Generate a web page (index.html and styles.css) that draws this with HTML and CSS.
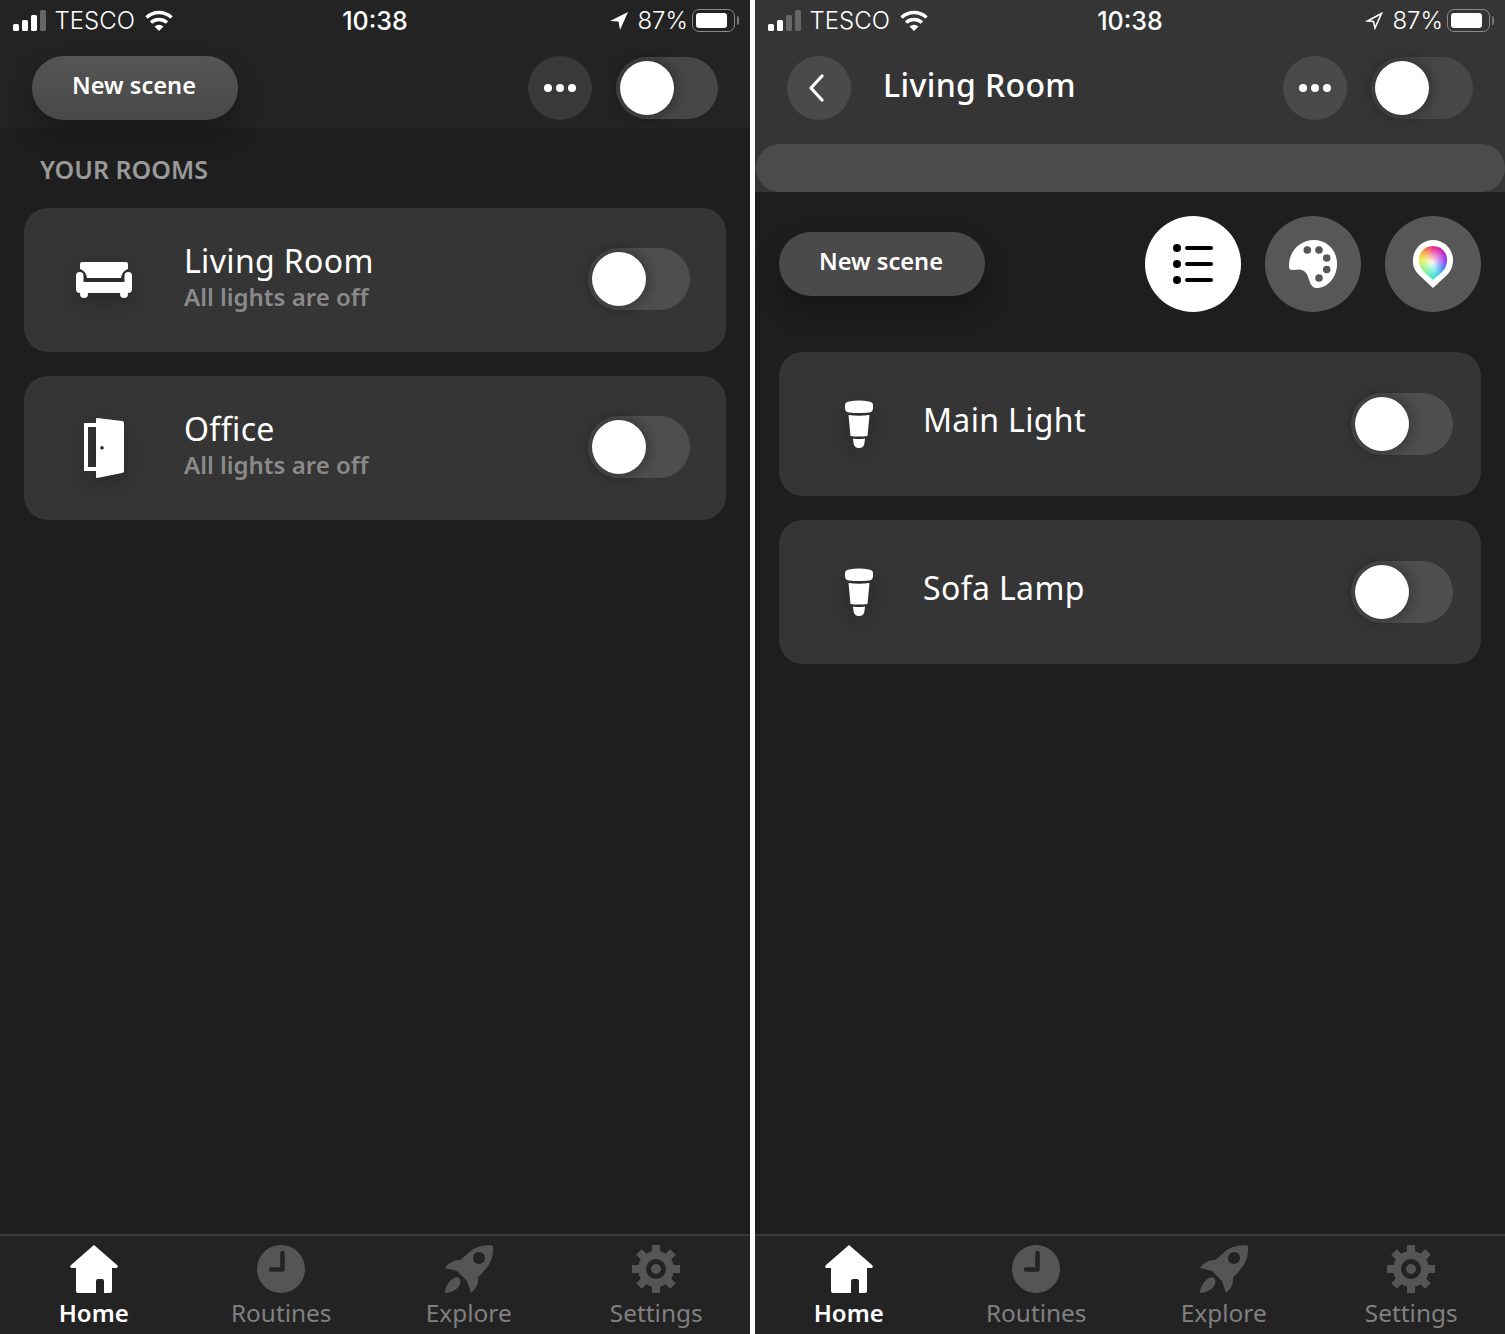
FILE: index.html
```html
<!DOCTYPE html>
<html>
<head>
  <title>Hue</title>
  <link rel="stylesheet" href="styles.css">
</head>
<body>
  <svg class="defs">
    <symbol id="wifi" viewBox="0 0 28 21">
      <path d="M1.5 7.5A18 18 0 0 1 26.5 7.5M6 12.5A12 12 0 0 1 22 12.5" fill="none" stroke="#fff" stroke-width="3.4"/>
      <path d="M9.5 16.5Q14 13 18.5 16.5L14 21Z" fill="#fff"/>
    </symbol>
    <symbol id="dots" viewBox="0 0 32 8"><circle cx="4" cy="4" r="4" fill="#fff"/><circle cx="16" cy="4" r="4" fill="#fff"/><circle cx="28" cy="4" r="4" fill="#fff"/></symbol>
    <symbol id="bulb" viewBox="0 0 28 48">
      <path fill="#fff" d="M0 5Q0 2 4 1.5Q14-.5 24 1.5Q28 2 28 5V8Q28 12 24 12.5Q14 13.5 4 12.5Q0 12 0 8Z"/>
      <path fill="#fff" d="M3.5 15Q14 16.5 24.5 15L22.5 36Q14 37 5.5 36Z"/>
      <path fill="#fff" d="M8 38.5Q14 39.5 20 38.5L19.5 43Q19 48 14 48Q9 48 8.5 43Z"/>
    </symbol>
    <symbol id="tab-home" viewBox="0 0 48 48">
      <path fill="currentColor" d="M24 0L47 20Q49 23 46 23H42V46Q42 48 40 48H34V36Q34 34 32 34H28Q26 34 26 36V48H8Q6 48 6 46V23H2Q-1 23 1 20Z"/>
    </symbol>
    <symbol id="tab-routines" viewBox="0 0 48 48">
      <circle cx="24" cy="24" r="24" fill="currentColor"/>
      <path d="M25.5 8V24.5H14" fill="none" stroke="#232323" stroke-width="4.5" stroke-linecap="round" stroke-linejoin="round"/>
    </symbol>
    <symbol id="tab-explore" viewBox="0 0 48 48">
      <path fill="currentColor" fill-rule="evenodd" d="M48 1C47 0 36-1 27 5C22 9 18 13 15 15C9 15 3 18 0 23L12 26L22 36L26 48C31 44 34 38 33 32C37 29 40 25 43 21C49 13 48 3 48 1ZM34 7a6 6 0 1 0 .01 0Z"/>
      <path fill="currentColor" d="M9 33C13 31 17 34 15 39C13 45 5 48 0 48C0 43 3 36 9 33Z"/>
    </symbol>
    <symbol id="tab-settings" viewBox="0 0 48 48">
      <g stroke="currentColor" stroke-width="8">
        <path d="M24 0V48M0 24H48M7 7L41 41M41 7L7 41"/>
      </g>
      <circle cx="24" cy="24" r="18" fill="currentColor"/>
      <circle cx="24" cy="24" r="7.5" fill="none" stroke="#232323" stroke-width="5"/>
    </symbol>
  </svg>

  <div class="screens">
    <!-- rooms -->
    <section class="phone">
      <header class="top">
        <div class="status">
          <div class="status-side">
            <div class="signal">
              <span class="bar bar-1"></span><span class="bar bar-2"></span><span class="bar bar-3"></span><span class="bar bar-4 bar-off"></span>
            </div>
            <span class="carrier">TESCO</span>
            <svg class="wifi"><use href="#wifi"/></svg>
          </div>
          <div class="time">10:38</div>
          <div class="status-side status-right">
            <svg class="arrow" viewBox="0 0 18 18"><path fill="#fff" d="M0 9L18 0L10 18L8.5 9.5Z"/></svg>
            <span class="percent">87%</span>
            <div class="battery"><div class="battery-body"><div class="battery-fill"></div></div><div class="battery-nub"></div></div>
          </div>
        </div>
        <div class="toolbar">
          <button class="pill pill-top">New scene</button>
          <div class="toolbar-end">
            <div class="round"><svg class="dots"><use href="#dots"/></svg></div>
            <div class="toggle toggle-top"><span class="knob"></span></div>
          </div>
        </div>
      </header>
      <main class="content">
        <h2 class="rooms-label">YOUR ROOMS</h2>
        <div class="cards">
          <div class="card">
            <div class="card-icon">
              <svg class="icon-sofa" viewBox="0 0 56 36">
                <path fill="#fff" d="M4 2Q4 0 6 0H50Q52 0 52 2V7Q46 9 45 16H11Q10 9 4 7Z"/>
                <rect x="0" y="10" width="7.5" height="21" rx="3.7" fill="#fff"/>
                <rect x="48.5" y="10" width="7.5" height="21" rx="3.7" fill="#fff"/>
                <rect x="7" y="20" width="42" height="11" fill="#fff"/>
                <rect x="4" y="28" width="8" height="8" rx="4" fill="#fff"/>
                <rect x="44" y="28" width="8" height="8" rx="4" fill="#fff"/>
              </svg>
            </div>
            <div class="card-text">
              <div class="card-title">Living Room</div>
              <div class="card-sub">All lights are off</div>
            </div>
            <div class="toggle toggle-room"><span class="knob"></span></div>
          </div>
          <div class="card">
            <div class="card-icon">
              <svg class="icon-door" viewBox="0 0 40 60">
                <path fill="#fff" d="M12 5H0V53H12V49H4V9H12Z"/>
                <path fill="#fff" fill-rule="evenodd" d="M12 1Q12 0 13 0L38 3Q40 3 40 5V53Q40 55 38 55L13 60Q12 60 12 59ZM18 28a1.8 1.8 0 1 0 .01 0Z"/>
              </svg>
            </div>
            <div class="card-text">
              <div class="card-title">Office</div>
              <div class="card-sub">All lights are off</div>
            </div>
            <div class="toggle toggle-room"><span class="knob"></span></div>
          </div>
        </div>
      </main>
      <nav class="tabs">
        <div class="tab tab-active"><svg class="tab-icon"><use href="#tab-home"/></svg><span>Home</span></div>
        <div class="tab"><svg class="tab-icon"><use href="#tab-routines"/></svg><span>Routines</span></div>
        <div class="tab"><svg class="tab-icon"><use href="#tab-explore"/></svg><span>Explore</span></div>
        <div class="tab"><svg class="tab-icon"><use href="#tab-settings"/></svg><span>Settings</span></div>
      </nav>
    </section>

    <!-- living room -->
    <section class="phone">
      <header class="top top-room">
        <div class="status">
          <div class="status-side">
            <div class="signal">
              <span class="bar bar-1"></span><span class="bar bar-2"></span><span class="bar bar-3 bar-off"></span><span class="bar bar-4 bar-off"></span>
            </div>
            <span class="carrier">TESCO</span>
            <svg class="wifi"><use href="#wifi"/></svg>
          </div>
          <div class="time">10:38</div>
          <div class="status-side status-right">
            <svg class="arrow" viewBox="0 0 18 18"><path fill="none" stroke="#fff" stroke-width="1.6" d="M2.5 9L16.5 1.5L10 16L8.5 9.5Z"/></svg>
            <span class="percent">87%</span>
            <div class="battery"><div class="battery-body"><div class="battery-fill"></div></div><div class="battery-nub"></div></div>
          </div>
        </div>
        <div class="toolbar">
          <div class="toolbar-start">
            <div class="round round-light">
              <svg class="back" viewBox="0 0 16 28"><path d="M14 2L3 14L14 26" fill="none" stroke="#fff" stroke-width="3.2" stroke-linecap="round" stroke-linejoin="round"/></svg>
            </div>
            <h1 class="room-title">Living Room</h1>
          </div>
          <div class="toolbar-end">
            <div class="round round-light"><svg class="dots"><use href="#dots"/></svg></div>
            <div class="toggle toggle-top"><span class="knob"></span></div>
          </div>
        </div>
        <div class="brightness"></div>
      </header>
      <main class="content">
        <div class="scene-row">
          <button class="pill">New scene</button>
          <div class="views">
            <div class="view view-on">
              <svg class="icon-list" viewBox="0 0 40 40">
                <circle cx="4" cy="4" r="4"/><circle cx="4" cy="20" r="4"/><circle cx="4" cy="36" r="4"/>
                <path d="M14 4H38M14 20H38M14 36H38" stroke="#000" stroke-width="4" stroke-linecap="round"/>
              </svg>
            </div>
            <div class="view">
              <svg class="icon-palette" viewBox="0 0 48 48">
                <path fill="#fff" d="M0 26C0 10 12 0 25 0C38 0 48 10 48 24C48 38 38 48 28 48C20 48 21 38 17 33C13 28 8 30 4 30C1 30 0 29 0 26Z"/>
                <circle cx="18.3" cy="10" r="3.8" fill="#575757"/>
                <circle cx="30" cy="10" r="3.8" fill="#575757"/>
                <circle cx="37.7" cy="18" r="3.8" fill="#575757"/>
                <circle cx="37.7" cy="29.5" r="3.8" fill="#575757"/>
                <circle cx="30" cy="38" r="3.8" fill="#575757"/>
              </svg>
            </div>
            <div class="view">
              <div class="pin"><div class="pin-colors"></div></div>
            </div>
          </div>
        </div>
        <div class="cards cards-lights">
          <div class="card card-light">
            <div class="card-icon card-icon-light"><svg class="icon-bulb"><use href="#bulb"/></svg></div>
            <div class="card-text"><div class="card-title">Main Light</div></div>
            <div class="toggle"><span class="knob"></span></div>
          </div>
          <div class="card card-light">
            <div class="card-icon card-icon-light"><svg class="icon-bulb"><use href="#bulb"/></svg></div>
            <div class="card-text"><div class="card-title">Sofa Lamp</div></div>
            <div class="toggle"><span class="knob"></span></div>
          </div>
        </div>
      </main>
      <nav class="tabs">
        <div class="tab tab-active"><svg class="tab-icon"><use href="#tab-home"/></svg><span>Home</span></div>
        <div class="tab"><svg class="tab-icon"><use href="#tab-routines"/></svg><span>Routines</span></div>
        <div class="tab"><svg class="tab-icon"><use href="#tab-explore"/></svg><span>Explore</span></div>
        <div class="tab"><svg class="tab-icon"><use href="#tab-settings"/></svg><span>Settings</span></div>
      </nav>
    </section>
  </div>
</body>
</html>
```
FILE: styles.css
```css
body {
  margin: 0;
  padding: 0;
  background: #fff;
  font-family: "Noto Sans", "Open Sans", sans-serif;
  color: #fff;
}

.defs {
  display: none;
}

.screens {
  display: flex;
  gap: 5px;
  width: 1505px;
  height: 1334px;
  overflow: hidden;
}

.phone {
  display: flex;
  flex-direction: column;
  width: 750px;
  height: 1334px;
  background: #1e1e1e;
}

/* header */
.top {
  height: 128px;
  background: #232323;
}

.top-room {
  height: 192px;
  background: #353535;
}

.status {
  display: grid;
  grid-template-columns: 1fr auto 1fr;
  align-items: center;
  height: 40px;
  padding: 1px 11px 0 13px;
  box-sizing: border-box;
  font-family: Inter, "Liberation Sans", sans-serif;
  font-size: 25px;
}

.status-side {
  display: flex;
  align-items: center;
}

.status-right {
  justify-content: flex-end;
}

.signal {
  display: flex;
  align-items: flex-end;
  gap: 3.5px;
  height: 21px;
}

.bar {
  width: 5.5px;
  background: #fff;
  border-radius: 1.5px;
}

.bar-1 { height: 7px; }
.bar-2 { height: 11px; }
.bar-3 { height: 16px; }
.bar-4 { height: 21px; }

.bar-off {
  background: #666;
}

.carrier {
  margin-left: 9px;
  font-size: 24px;
  font-weight: 300;
}

.wifi {
  width: 28px;
  height: 21px;
  margin-left: 10px;
}

.time {
  font-weight: 500;
  margin-left: -2px;
}

.arrow {
  width: 18px;
  height: 18px;
  margin-right: 9px;
}

.percent {
  margin-right: 4px;
  font-size: 24px;
  font-weight: 300;
}

.battery {
  display: flex;
  align-items: center;
  gap: 2px;
}

.battery-body {
  width: 43px;
  height: 23px;
  padding: 3px;
  box-sizing: border-box;
  border: 1px solid #8a8a8a;
  border-radius: 7px;
}

.battery-fill {
  width: 31px;
  height: 100%;
  background: #fff;
  border-radius: 3px;
}

.battery-nub {
  width: 2px;
  height: 9px;
  background: #777;
  border-radius: 0 2px 2px 0;
}

.toolbar {
  display: flex;
  justify-content: space-between;
  align-items: center;
  height: 64px;
  margin-top: 16px;
  padding: 0 32px;
}

.toolbar-start,
.toolbar-end {
  display: flex;
  align-items: center;
}

.toolbar-end {
  gap: 24px;
}

.room-title {
  margin: -8px 0 0 32px;
  font-size: 32px;
  font-weight: 500;
  letter-spacing: 0.35px;
}

.round {
  display: flex;
  justify-content: center;
  align-items: center;
  width: 64px;
  height: 64px;
  background: #393939;
  border-radius: 50%;
}

.round-light {
  background: #4a4a4a;
}

.dots {
  width: 32px;
  height: 8px;
}

.back {
  width: 16px;
  height: 28px;
  margin-right: 6px;
}

.brightness {
  height: 48px;
  margin: 24px 0 0 1px;
  background: #4b4b4b;
  border-radius: 24px;
}

/* buttons and toggles */
.pill {
  width: 206px;
  height: 64px;
  padding: 0 2px 6px 0;
  border: none;
  border-radius: 32px;
  background: #4a4a4a;
  color: #fff;
  font-family: inherit;
  font-size: 23.6px;
  font-weight: 600;
  box-shadow: 0 14px 28px rgba(0, 0, 0, 0.3);
}

.pill-top {
  background: linear-gradient(#555, #484848);
}

.toggle {
  display: flex;
  align-items: center;
  width: 102px;
  height: 62px;
  padding: 4px;
  box-sizing: border-box;
  background: #4e4e4e;
  border-radius: 31px;
}

.toggle-top {
  background: #474747;
}

.toggle-room {
  margin-top: -2px;
}

.knob {
  width: 54px;
  height: 54px;
  background: #fff;
  border-radius: 50%;
  box-shadow: 0 0 14px 2px rgba(0, 0, 0, 0.35);
}

/* content */
.content {
  flex: 1;
  padding: 0 24px;
}

.rooms-label {
  margin: 0;
  padding: 23px 16px 0;
  height: 57px;
  font-size: 25px;
  line-height: 36px;
  font-weight: 600;
  color: #999;
}

.cards {
  display: flex;
  flex-direction: column;
  gap: 24px;
}

.cards-lights {
  margin-top: 40px;
}

.card {
  display: flex;
  align-items: center;
  height: 144px;
  padding-right: 36px;
  background: #353535;
  border-radius: 24px;
}

.card-light {
  padding-right: 28px;
}

.card-icon {
  display: flex;
  justify-content: center;
  align-items: center;
  flex: none;
  width: 160px;
  height: 100%;
  filter: drop-shadow(0 8px 10px rgba(0, 0, 0, 0.25));
}

.card-icon-light {
  width: 144px;
  justify-content: flex-start;
  padding-left: 66px;
  box-sizing: border-box;
}

.card-text {
  flex: 1;
  padding-bottom: 3px;
}

.card-title {
  font-size: 32px;
  line-height: 37px;
  letter-spacing: 0.35px;
}

.card-light .card-title {
  margin-bottom: 7px;
}

.card-sub {
  margin-top: -1px;
  font-size: 24px;
  line-height: 37px;
  font-weight: 600;
  color: #8a8a8a;
}

.icon-sofa {
  width: 56px;
  height: 36px;
}

.icon-door {
  width: 40px;
  height: 60px;
}

.icon-bulb {
  width: 28px;
  height: 48px;
}

.scene-row {
  display: flex;
  justify-content: space-between;
  align-items: center;
  padding-top: 24px;
}

.views {
  display: flex;
  gap: 24px;
}

.view {
  display: flex;
  justify-content: center;
  align-items: center;
  width: 96px;
  height: 96px;
  background: #575757;
  border-radius: 50%;
}

.view-on {
  background: #fff;
}

.icon-list {
  width: 40px;
  height: 40px;
}

.icon-palette {
  width: 48px;
  height: 48px;
}

.pin {
  width: 40px;
  height: 48px;
  padding: 6px;
  box-sizing: border-box;
  background: #fff;
  clip-path: path("M20 48L6 35C0 29 0 24 0 20C0 9 9 0 20 0C31 0 40 9 40 20C40 24 39 30 34 35Z");
}

.pin-colors {
  width: 28px;
  height: 36px;
  background: radial-gradient(circle at 50% 45%, rgba(255, 255, 255, 0.9), rgba(255, 255, 255, 0) 60%),
    conic-gradient(from 0deg at 50% 45%, #f0308a, #9020f0 80deg, #3070f0 120deg, #40e0e0 170deg, #70f090 220deg, #e0f040 280deg, #f8a030 320deg, #f0308a);
  clip-path: path("M14 34L5 26C1 22 0 18 0 14C0 6 6 0 14 0C22 0 28 6 28 14C28 18 27 22 23 26Z");
}

/* tab bar */
.tabs {
  display: grid;
  grid-template-columns: repeat(4, 1fr);
  height: 98px;
  background: #232323;
  border-top: 2px solid #3a3a3a;
}

.tab {
  display: flex;
  flex-direction: column;
  align-items: center;
  padding-top: 9px;
  font-size: 24.4px;
  color: #808080;
  font-weight: 400;
}

.tab span {
  line-height: 34px;
  margin-top: 3px;
}

.tab-icon {
  width: 48px;
  height: 48px;
  color: #555;
}

.tab-active {
  color: #fff;
  font-size: 24px;
  font-weight: 600;
}

.tab-active .tab-icon {
  color: #fff;
}
```
